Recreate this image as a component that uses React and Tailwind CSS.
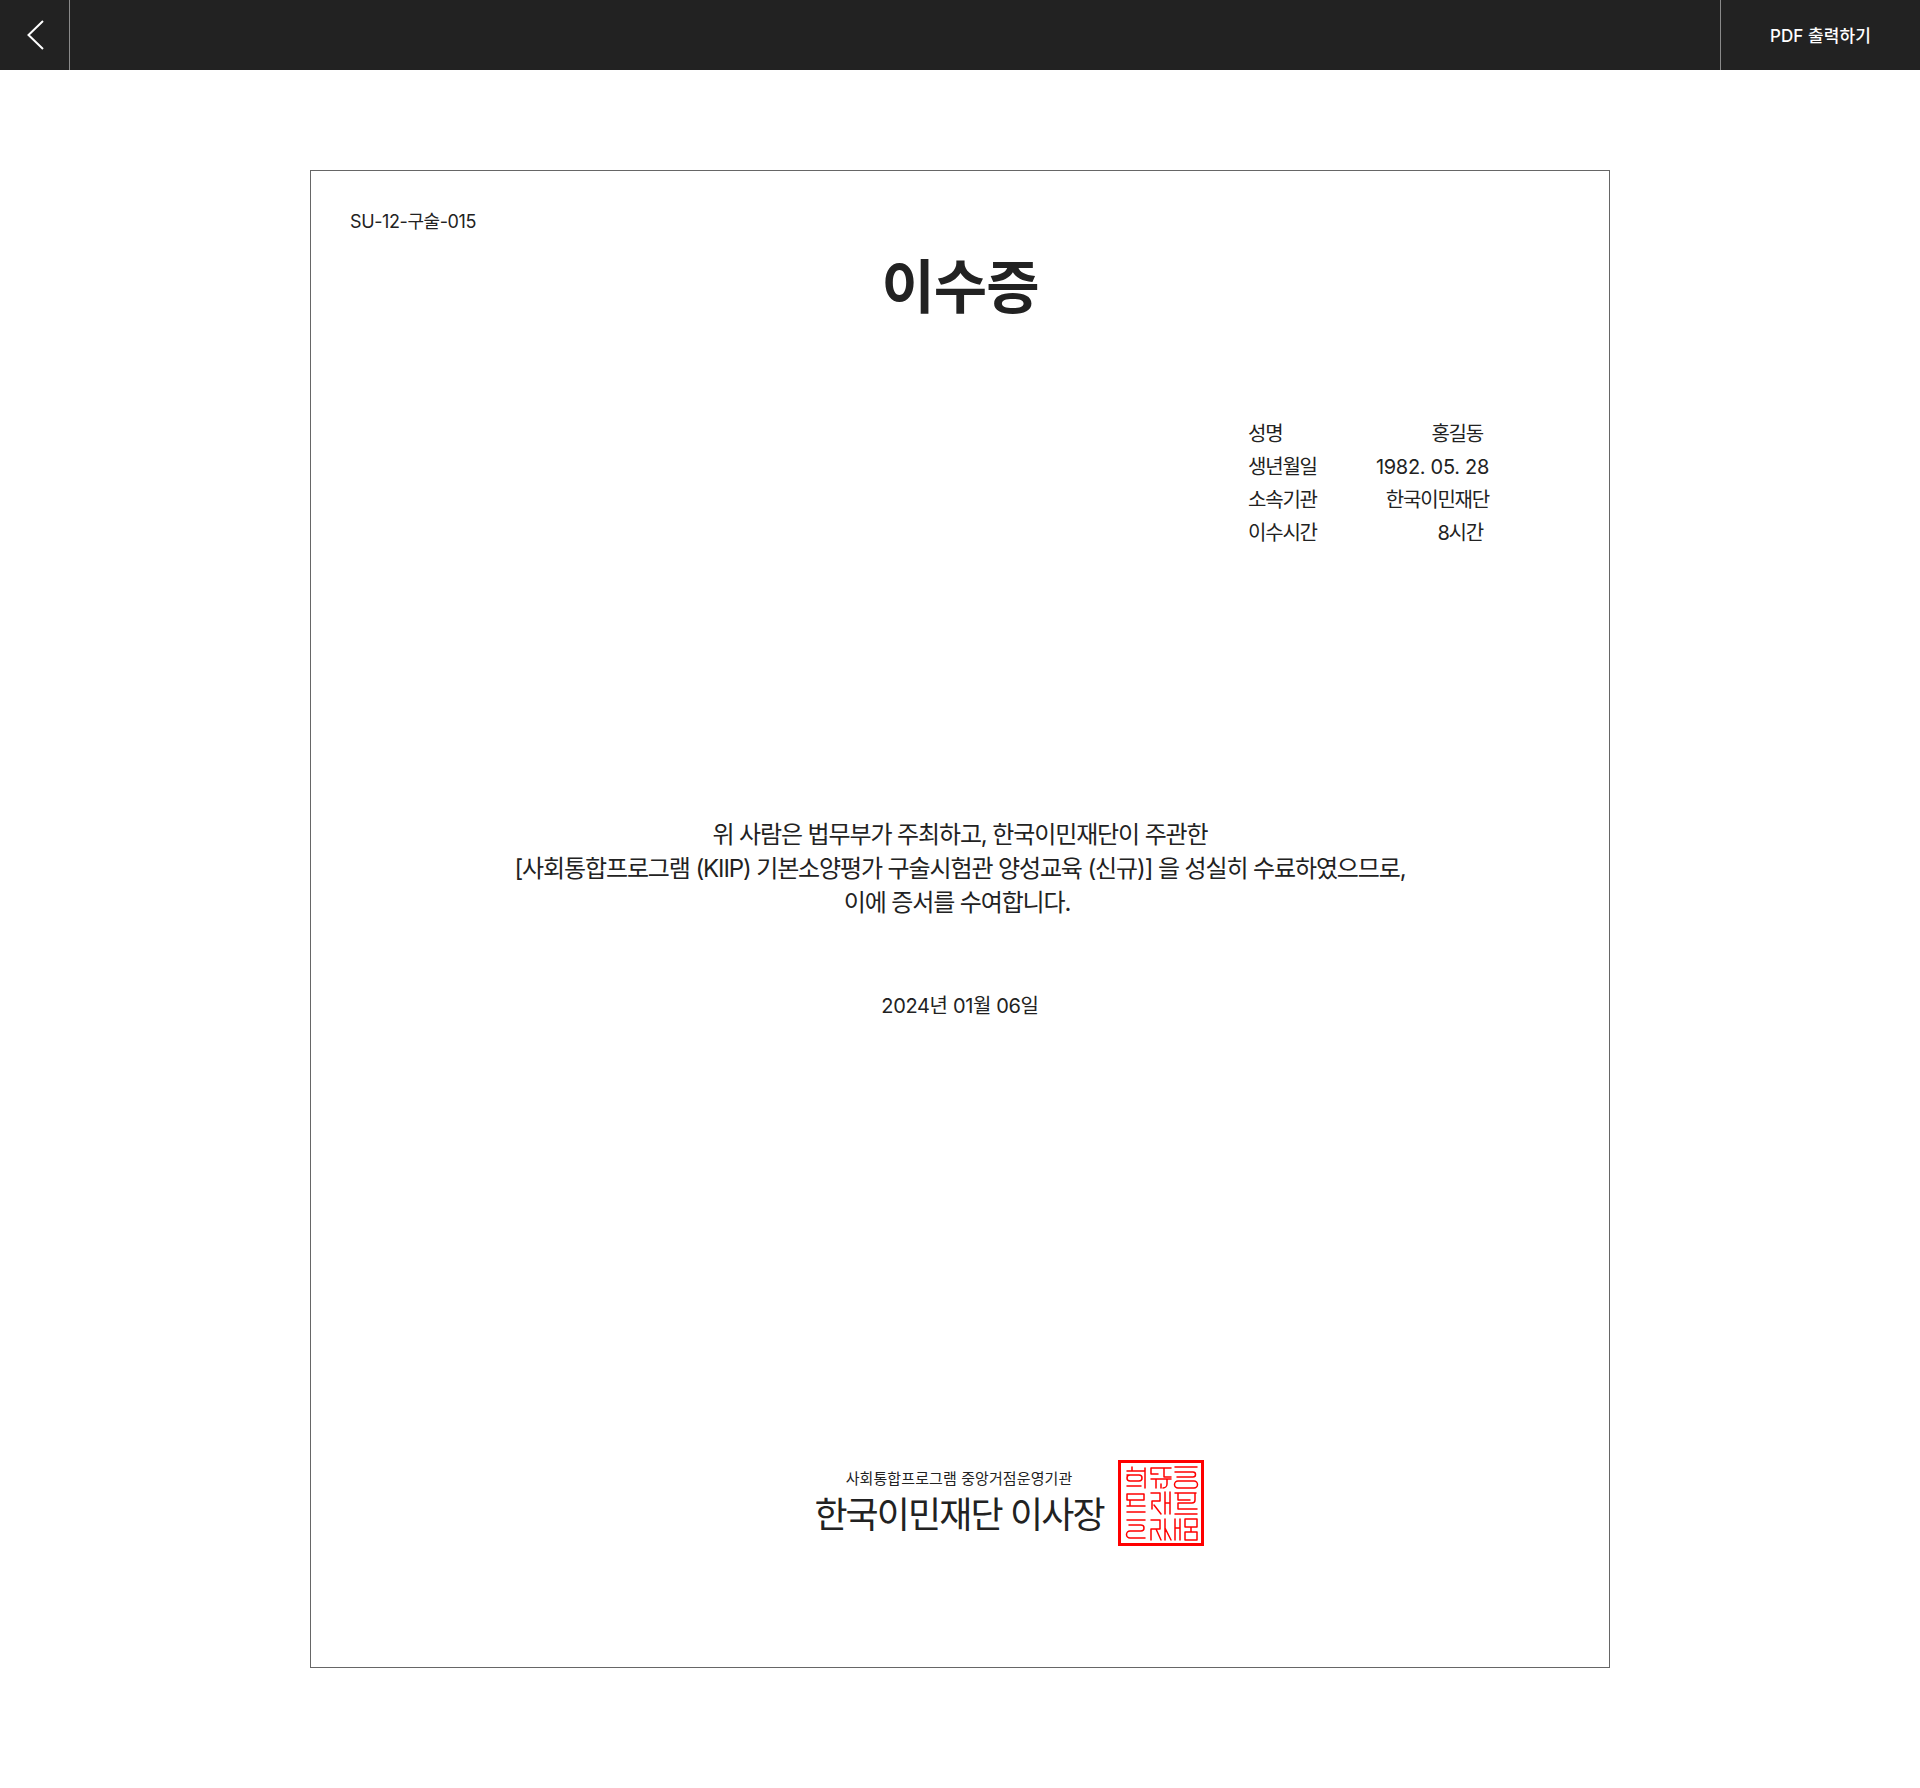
const kr = { fontFamily: '"Inter", "Noto Sans CJK KR", sans-serif' };

function Seal() {
  const s = [
    // top-left
    "M14 7v3M9 11h17M9 15h12a3 3 0 0 1 0 6H12a3 3 0 0 1 0-6M9 26h14M27 8v20",
    // top-middle
    "M33 8h20M33 8v6h7M46 8v9h7M33 19h20M38 19v9M43 24v4M49 19v5a4 4 0 0 1-4 4",
    // top-right
    "M57 7h22M57 12h18a2.5 2.5 0 0 1 0 5H59M60 21h16a3.5 3.5 0 0 1 0 7H60a3.5 3.5 0 0 1 0-7",
    // middle-left
    "M9 34h17v6H9zM12 40v6M9 46h18M9 52h18",
    // middle-middle
    "M33 33h9v8h-8v8M36 45l7 9M47 32v22M52 32v22M47 43h5",
    // middle-right
    "M57 33h21M60 33v7h12M77 33v7a3 3 0 0 1-3 3H60v6h19M57 54h22",
    // bottom-left
    "M9 60h18M11 65h12a3 3 0 0 1 0 6H12a3.5 3.5 0 0 0 0 7h15",
    // bottom-middle
    "M33 60h9v9h-9v11M38 69l5 11M47 59v21M47 68l6 12",
    // bottom-right
    "M57 59v21M62 59v21M57 68h5M67 59h12v8H67zM67 72h12v8H67zM73 67v5",
  ];
  return (
    <svg width="86" height="86" viewBox="0 0 86 86" fill="none">
      <rect x="1.5" y="1.5" width="83" height="83" stroke="#ff0000" strokeWidth="3" />
      <g stroke="#ff0000" strokeWidth="1.5" strokeLinecap="round" strokeLinejoin="round">
        {s.map((d, i) => <path key={i} d={d} />)}
      </g>
    </svg>
  );
}

const rows = [
  ["성명", "홍길동", "pr-[6px] tracking-[-1.2px]"],
  ["생년월일", "1982. 05. 28", "tracking-[-0.3px]"],
  ["소속기관", "한국이민재단", "tracking-[-1.2px]"],
  ["이수시간", "8시간", "pr-[6px] tracking-[-1.2px]"],
];

export default function App() {
  return (
    <div className="bg-white text-[#222222] min-h-[1788px]" style={kr}>
      <header className="h-[70px] bg-[#222222] flex items-stretch justify-between">
        <button className="w-[70px] border-r border-[#8a8a8a] flex items-center justify-center">
          <svg width="20" height="32" viewBox="0 0 20 32" fill="none" className="ml-[2px]">
            <path d="M17 2 L2.5 16 L17 30" stroke="#ffffff" strokeWidth="2" />
          </svg>
        </button>
        <button className="w-[200px] border-l border-[#8a8a8a] flex items-center justify-center pt-[3px] text-white text-[17px] font-medium tracking-[0.1px]">
          PDF 출력하기
        </button>
      </header>
      <main className="pt-[100px] flex justify-center">
        <section className="w-[1300px] h-[1498px] border border-[#666666] px-[39px] pt-[38px] flex flex-col">
          <p className="text-[18px] leading-[24px] tracking-[-0.4px] pt-[1px] -mb-[1px]">SU-12-구술-015</p>
          <h1 className="text-[58px] leading-[70px] font-bold text-center mt-[19px] tracking-[-1px]">이수증</h1>
          <dl className="mt-[96px] self-end mr-[81px] w-[241px] text-[20px] leading-[33px]">
            {rows.map(([k, v, cls]) => (
              <div key={k} className="flex justify-between">
                <dt className="tracking-[-1.2px]">{k}</dt>
                <dd className={cls}>{v}</dd>
              </div>
            ))}
          </dl>
          <div className="mt-[268px] text-center text-[24px] leading-[34px] tracking-[-1.12px]">
            <p>위 사람은 법무부가 주최하고, 한국이민재단이 주관한</p>
            <p>[사회통합프로그램 (KIIP) 기본소양평가 구술시험관 양성교육 (신규)] 을 성실히 수료하였으므로,</p>
            <p className="pr-[6px]">이에 증서를 수여합니다.</p>
          </div>
          <p className="mt-[69px] text-center text-[20px] leading-[34px] tracking-[-0.35px]">2024년 01월 06일</p>
          <div className="mt-[439px] flex justify-center">
            <div className="relative text-center -translate-x-[1px]">
              <p className="text-[15px] leading-[20px] tracking-[0.1px] mt-[7px]">사회통합프로그램 중앙거점운영기관</p>
              <p className="text-[36px] leading-[48px] tracking-[-1.9px] mt-[2px]">한국이민재단 이사장</p>
              <div className="absolute left-full ml-[14px] -top-[2px]">
                <Seal />
              </div>
            </div>
          </div>
        </section>
      </main>
    </div>
  );
}
